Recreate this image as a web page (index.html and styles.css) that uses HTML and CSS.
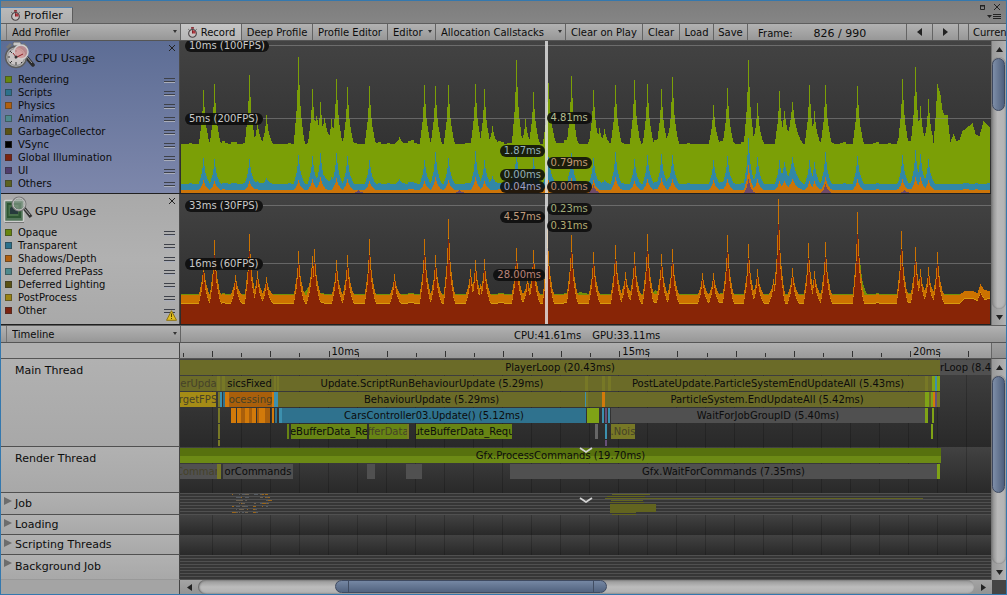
FILE: index.html
```html
<!DOCTYPE html>
<html lang="en">
<head>
<meta charset="utf-8">
<title>Profiler</title>
<link rel="stylesheet" href="styles.css">
</head>
<body>
<svg class="defs" aria-hidden="true">
  <symbol id="stopwatch" viewBox="0 0 12 12">
    <rect x="4.5" y="0" width="3" height="2" fill="#8a3038"/>
    <path d="M1.5 2.5l1.3 1.2M10.500 2.500l-1.300 1.200" stroke="#444" stroke-width="1"/>
    <circle cx="6" cy="7" r="4.200" fill="#c9c3c3" stroke="#4a4446" stroke-width="1.200"/>
    <path d="M6 7V3.500A3.500 3.500 0 0 1 9.500 7z" fill="#b03840"/>
    <path d="M6 7V3.500" stroke="#7c1820"/>
  </symbol>
</svg>
<main class="window">
  <header class="tabbar">
    <button class="tab"><svg class="icon"><use href="#stopwatch"/></svg>Profiler</button>
    <div class="window-controls">
      <div class="control-row">
        <button class="plain" aria-label="Maximize"><svg width="5" height="5" viewBox="0 0 5 5"><path d="M.5 1h4v3.500h-4z" fill="none" stroke="#222"/><path d="M0 .5h5" stroke="#222"/></svg></button>
        <button class="plain" aria-label="Close window"><svg width="8" height="8" viewBox="0 0 8 8"><path d="M1 1l6 6M7 1L1 7" stroke="#222"/></svg></button>
      </div>
      <button class="plain" aria-label="Window menu"><svg width="14" height="6" viewBox="0 0 14 6"><path d="M0 1h5L2.500 4z" fill="#222"/><path d="M6 .5h8M6 2.500h8M6 4.500h8" stroke="#222"/></svg></button>
    </div>
  </header>

  <div class="toolbar">
    <label class="drop drop-side"><select aria-label="Add Profiler"><option>Add Profiler</option></select></label>
    <button class="tool tool-on w-record"><svg class="icon"><use href="#stopwatch"/></svg>Record</button>
    <button class="tool w-deep">Deep Profile</button>
    <button class="tool w-wide">Profile Editor</button>
    <label class="drop w-editor"><select aria-label="Target"><option>Editor</option></select></label>
    <label class="drop w-alloc"><select aria-label="Allocation Callstacks"><option>Allocation Callstacks</option></select></label>
    <button class="tool w-play">Clear on Play</button>
    <button class="tool w-clear">Clear</button>
    <button class="tool w-load">Load</button>
    <button class="tool w-load">Save</button>
    <div class="frame"><span>Frame:</span><span>826 / 990</span></div>
    <button class="tool w-step" aria-label="Previous frame"><svg width="5" height="8" viewBox="0 0 5 8"><path d="M5 0v8L0 4z" fill="#222"/></svg></button>
    <button class="tool w-step" aria-label="Next frame"><svg width="5" height="8" viewBox="0 0 5 8"><path d="M0 0v8l5-4z" fill="#222"/></svg></button>
    <span class="spacer"></span>
    <button class="tool current">Current</button>
  </div>

  <section class="charts">
    <div class="chart-rows">
      <div class="chart-row">
        <aside class="legend legend-cpu">
          <div class="legend-head">
            <svg width="32" height="30" viewBox="0 0 32 30">
              <path d="M24 17l6 7" stroke="#2c2c2c" stroke-width="3.500" stroke-linecap="round"/><path d="M24 16l5 6" stroke="#999" stroke-width="1"/>
              <path d="M4 7l4-4M20 3l4 4" stroke="#777" stroke-width="3"/><rect x="10" y="1" width="8" height="4" rx="1.500" fill="#c6c6c6" stroke="#666"/>
              <circle cx="13" cy="16" r="10.500" fill="#b4b4b4" stroke="#5c5c5c" stroke-width="1.500"/>
              <circle cx="13" cy="16" r="8.500" fill="#c9c4c4" stroke="#8a8a8a"/>
              <path d="M13 9v2M13 21v3M5 16h2M7 10l2 2M7 22l2-2M18 21l1 1" stroke="#333"/>
              <circle cx="18" cy="11" r="7" fill="#d49696" fill-opacity=".75" stroke="#cfcfcf" stroke-width="1.500"/>
              <path d="M12 17l8-4M13 16l-3-4" stroke="#8c2026"/><circle cx="13" cy="16" r="1.500" fill="#333"/>
            </svg>
            <h2>CPU Usage</h2>
            <button class="plain close" aria-label="Remove CPU Usage"><svg width="8" height="8" viewBox="0 0 8 8"><path d="M1 1l6 6M7 1L1 7" stroke="#222"/></svg></button>
          </div>
          <ul>
            <li class="green">Rendering</li><li class="blue">Scripts</li><li class="orange">Physics</li><li class="teal">Animation</li><li class="olive">GarbageCollector</li><li class="black">VSync</li><li class="red">Global Illumination</li><li class="purple">UI</li><li class="moss">Others</li>
          </ul>
        </aside>
        <div class="chart">
          <svg id="cpu-chart" viewBox="0 0 811 152" preserveAspectRatio="none" role="img" aria-label="CPU usage"></svg>
          <div class="guide cpu-top"><span>10ms (100FPS)</span></div>
          <div class="guide cpu-mid"><span>5ms (200FPS)</span></div>
          <div class="cursor"></div>
          <div id="cpu-values"></div>
        </div>
      </div>
      <div class="chart-row">
        <aside class="legend legend-gpu">
          <div class="legend-head">
            <svg width="32" height="30" viewBox="0 0 32 30">
              <rect x="1.500" y="6.500" width="19" height="21" rx="1" fill="#53755a" stroke="#cdcdcd" stroke-width="1.500"/><path d="M2 28.500h19" stroke="#777"/>
              <rect x="4" y="9" width="14" height="15" fill="#2c5532"/><rect x="5.500" y="11" width="10" height="11" fill="#49704b"/><path d="M7 20v-6l3-2 5 3v5z" fill="#263a3c"/>
              <path d="M21 14l7 9" stroke="#333" stroke-width="3.500"/><path d="M21 14l6 7" stroke="#aaa"/>
              <circle cx="16" cy="10" r="6.500" fill="#8fa295" fill-opacity=".6" stroke="#777" stroke-width="2"/><circle cx="16" cy="10" r="6" fill="none" stroke="#ccc"/>
            </svg>
            <h2>GPU Usage</h2>
            <button class="plain close" aria-label="Remove GPU Usage"><svg width="8" height="8" viewBox="0 0 8 8"><path d="M1 1l6 6M7 1L1 7" stroke="#222"/></svg></button>
          </div>
          <ul>
            <li class="green">Opaque</li><li class="blue">Transparent</li><li class="orange">Shadows/Depth</li><li class="teal">Deferred PrePass</li><li class="olive">Deferred Lighting</li><li class="yellow">PostProcess</li><li class="red">Other</li>
          </ul>
          <svg class="warning" width="11" height="11" viewBox="0 0 11 11"><path d="M5.500.7L10.500 10.300H.5z" fill="#e0bd20" stroke="#8e7410"/><path d="M5.500 3.500v3.500M5.500 8v1" stroke="#544300"/></svg>
        </aside>
        <div class="chart">
          <svg id="gpu-chart" viewBox="0 0 811 130" preserveAspectRatio="none" role="img" aria-label="GPU usage"></svg>
          <div class="guide gpu-top"><span>33ms (30FPS)</span></div>
          <div class="guide gpu-mid"><span>16ms (60FPS)</span></div>
          <div class="cursor"></div>
          <div id="gpu-values"></div>
        </div>
      </div>
    </div>
    <div class="vscroll">
      <button class="plain" aria-label="Scroll charts up"><svg width="7" height="5" viewBox="0 0 7 5"><path d="M0 5h7L3.500 0z" fill="#222"/></svg></button>
      <div class="track"><div class="thumb thumb-charts"></div></div>
      <button class="plain" aria-label="Scroll charts down"><svg width="7" height="5" viewBox="0 0 7 5"><path d="M0 0h7L3.500 5z" fill="#222"/></svg></button>
    </div>
  </section>

  <div class="toolbar">
    <label class="drop drop-side"><select aria-label="View"><option>Timeline</option></select></label>
    <div class="totals"><span>CPU:41.61ms</span><span>GPU:33.11ms</span></div>
  </div>

  <div class="ruler-row"><div class="ruler-side"></div><div class="ruler" id="ruler"></div><div class="ruler-end"></div></div>

  <section class="timeline">
    <div class="threads">
      <div class="thread main"><h3>Main Thread</h3><div class="lane" id="main-lane"></div></div>
      <div class="thread render"><h3>Render Thread</h3><div class="lane" id="render-lane"></div></div>
      <div class="thread job"><h3><button class="fold" aria-label="Expand Job"></button>Job</h3><div class="lane striped" id="job-lane"></div></div>
      <div class="thread small"><h3><button class="fold" aria-label="Expand Loading"></button>Loading</h3><div class="lane"></div></div>
      <div class="thread small"><h3><button class="fold" aria-label="Expand Scripting Threads"></button>Scripting Threads</h3><div class="lane"></div></div>
      <div class="thread back"><h3><button class="fold" aria-label="Expand Background Job"></button>Background Job</h3><div class="lane striped"></div></div>
    </div>
    <div class="vscroll">
      <button class="plain" aria-label="Scroll threads up"><svg width="7" height="5" viewBox="0 0 7 5"><path d="M0 5h7L3.500 0z" fill="#222"/></svg></button>
      <div class="track"><div class="thumb thumb-threads"></div></div>
      <button class="plain" aria-label="Scroll threads down"><svg width="7" height="5" viewBox="0 0 7 5"><path d="M0 0h7L3.500 5z" fill="#222"/></svg></button>
    </div>
  </section>

  <footer class="hscroll">
    <div class="hscroll-side"></div>
    <button class="plain" aria-label="Scroll left"><svg width="5" height="7" viewBox="0 0 5 7"><path d="M5 0v7L0 3.500z" fill="#222"/></svg></button>
    <div class="htrack"><div class="hthumb"></div></div>
    <button class="plain" aria-label="Scroll right"><svg width="5" height="7" viewBox="0 0 5 7"><path d="M0 0v7l5-3.500z" fill="#222"/></svg></button>
    <div class="corner"></div>
  </footer>
</main>
<script src="script.js"></script>
</body>
</html>
```
FILE: styles.css
```css
*, *::before, *::after { box-sizing: border-box; }
body { margin: 0; background: #828282; color: #0c0c0c; font: 10px/13px "DejaVu Sans", Verdana, sans-serif; }
button, select { font: inherit; color: inherit; margin: 0; padding: 0; border: 0; border-radius: 0; background: none; }
h2, h3, ul { margin: 0; padding: 0; font-weight: normal; list-style: none; }
svg { display: block; flex: none; }
.defs { position: absolute; width: 0; height: 0; }
.window { display: flex; flex-direction: column; min-height: 100vh; border: 1px solid #3478ae; overflow: hidden; }
.icon { width: 11px; height: 11px; }
.plain { display: flex; align-items: center; justify-content: center; }

.tabbar { display: flex; justify-content: space-between; height: 22px; background: linear-gradient(#7d7d7d, #858585); }
.tab { display: flex; align-items: center; gap: 3px; align-self: flex-end; height: 16px; padding: 0 9px; font-size: 11px; background: linear-gradient(#bababa, #aeaeae); border-top: 1px solid #5183b3; border-right: 1px solid #5c5c5c; }
.window-controls { display: flex; flex-direction: column; align-items: flex-end; gap: 3px; padding: 2px 5px 0 0; }
.control-row { display: flex; align-items: center; gap: 8px; }

.toolbar { display: flex; height: 18px; background: linear-gradient(#b2b2b2, #979797); border-top: 1px solid #5e5e5e; border-bottom: 1px solid #555; }
.tool, .drop { flex: none; display: flex; align-items: center; justify-content: center; gap: 3px; border-right: 1px solid #646464; white-space: nowrap; overflow: hidden; }
.tool-on { background: linear-gradient(#c6c6c6, #b5b5b5); }
.drop { position: relative; justify-content: flex-start; }
.drop select { appearance: none; width: 100%; height: 100%; padding-left: 5px; outline: 0; }
.drop::after { content: ""; position: absolute; right: 3px; top: 6px; border: 2px solid transparent; border-top: 3px solid #333; border-bottom: 0; }
.drop-side { width: 175px; margin-left: 5px; border-left: 1px solid #757575; }
.w-record { width: 61px; }
.w-deep { width: 71px; }
.w-wide { width: 75px; }
.w-editor { width: 48px; }
.w-alloc { width: 130px; }
.w-play { width: 77px; }
.w-clear { width: 37px; }
.w-load { width: 34px; }
.w-step { width: 26px; }
.frame { flex: none; display: flex; align-items: center; gap: 21px; width: 159px; padding: 2px 0 0 10px; border-right: 1px solid #646464; font-size: 11px; }
.frame span:first-child { font-size: 10px; }
.spacer { flex: none; width: 10px; border-right: 1px solid #646464; }
.current { flex: 1 1 0; justify-content: flex-start; padding-left: 4px; border: 0; }

.charts, .timeline { display: flex; }
.chart-rows, .threads { flex: 1; min-width: 0; }
.chart-row { display: grid; grid-template-columns: 179px minmax(0, 1fr); border-bottom: 1px solid #202020; }
.legend { position: relative; border-right: 1px solid #4b4b4b; }
.legend-cpu { padding-bottom: 3px; background: linear-gradient(#5d6d95, #7d87ab); }
.legend-gpu { padding-bottom: 7px; background: linear-gradient(#a9a9a9, #b1b1b1 50%, #a9a9a9); }
.legend-head { display: flex; height: 32px; padding: 0 3px 0 2px; }
.legend-head h2 { flex: 1; padding-top: 10px; font-size: 11px; line-height: 16px; }
.close { align-self: flex-start; padding-top: 3px; }
.legend li { display: flex; align-items: center; gap: 6px; height: 13px; padding: 0 4px; white-space: nowrap; }
.legend li::before { content: ""; width: 7px; height: 7px; border: 1px solid rgba(50, 50, 50, .5); background: var(--c); }
.legend li::after { content: ""; width: 11px; height: 4px; margin-left: auto; border: solid #3e4149; border-width: 1px 0; box-shadow: 0 1px 0 #a9adba; }
.green { --c: #67860f; } .blue { --c: #2c718c; } .orange { --c: #b16010; } .teal { --c: #4d898d; } .olive { --c: #5a5214; }
.black { --c: #000; } .red { --c: #7c2210; } .purple { --c: #4f3c6c; } .moss { --c: #5c6220; } .yellow { --c: #9b8413; }
.warning { position: absolute; right: 2px; bottom: 3px; }
.chart { position: relative; overflow: hidden; background: linear-gradient(#434343, #2b2b2b); }
.chart > svg { position: absolute; width: 100%; height: 100%; shape-rendering: crispEdges; }
.guide { position: absolute; left: 5px; right: 0; display: flex; align-items: center; height: 13px; }
.guide::after { content: ""; flex: 1; height: 1px; background: rgba(150, 150, 150, .5); }
.guide span, .value { padding: 0 4px; border-radius: 6px; background: rgba(12, 12, 12, .88); color: #c9c9c9; line-height: 12px; white-space: nowrap; }
.cpu-top { top: -2px; } .cpu-mid { top: 71px; } .gpu-top { top: 5px; } .gpu-mid { top: 63px; }
.cursor { position: absolute; top: 0; bottom: 0; left: 45%; width: 3px; background: rgba(230, 230, 230, .8); }
.value { position: absolute; }
.value.before { right: 55%; }
.value.after { left: 45.2%; }

.vscroll { flex: none; display: flex; flex-direction: column; width: 15px; background: linear-gradient(90deg, #999, #b2b2b2); border-left: 1px solid #747474; }
.vscroll .plain { height: 16px; }
.track { flex: 1; padding-top: 1px; border-radius: 7px; background: linear-gradient(90deg, #8d8d8d, #b8b8b8 40%, #b3b3b3); box-shadow: inset 0 0 2px #666; }
.thumb { width: 13px; border: 1px solid #3e4960; border-radius: 7px; background: linear-gradient(90deg, #7e8ea8, #4e5f7c); }
.thumb-charts { height: 21%; }
.thumb-threads { height: 62%; }
.totals { flex: 1; display: flex; gap: 11px; padding: 3px 0 0 333px; line-height: 13px; }

.ruler-row { display: grid; grid-template-columns: 179px minmax(0, 1fr) 15px; height: 16px; background: linear-gradient(#b0b0b0, #9a9a9a); border-bottom: 1px solid #555; }
.ruler-side { background: #b0b0b0; border-right: 1px solid #444; }
.ruler-end { border-left: 1px solid #666; background: linear-gradient(#a0a0a0, #8f8f8f); }
.ruler { position: relative; overflow: hidden; }
.tick { position: absolute; bottom: 1px; width: 1px; height: 4px; background: #333; }
.tick.tall { height: 6px; }
.tick-label { position: absolute; bottom: 0; padding-left: 3px; }

.timeline { flex: 1; }
.threads { display: flex; flex-direction: column; }
.thread { display: grid; grid-template-columns: 179px minmax(0, 1fr); }
.main { min-height: 88px; } .render { min-height: 46px; } .job { min-height: 22px; } .small { min-height: 20px; } .back { flex: 1; min-height: 25px; }
.thread h3 { position: relative; padding-left: 14px; border-right: 1px solid #444; border-bottom: 1px solid #505050; background: linear-gradient(#b1b1b1, #a8a8a8); font-size: 11px; line-height: 19px; }
.main h3, .render h3 { line-height: 23px; }
.job h3 { line-height: 21px; }
.back h3 { border-bottom-color: #999; line-height: 23px; }
.fold { position: absolute; left: 3px; top: 4px; border: 4px solid transparent; border-left: 8px solid #6d6d6d; border-right: 0; }
.lane { position: relative; overflow: hidden; background: repeating-linear-gradient(90deg, transparent 0 28px, rgba(0, 0, 0, .2) 28px 29px) 4px 0, linear-gradient(#424242, #292929); }
.striped { background: repeating-linear-gradient(#505050 0 1px, #363636 1px 3px); }
.bar { position: absolute; height: 15px; overflow: hidden; white-space: nowrap; line-height: 15px; display: flex; justify-content: center; background: var(--c); }
.bar.dim { color: #454228; }
.bar.grey.dim { color: #262626; }
.bar.short { height: 6px; }
.b-olive { --c: #6b6b28; } .b-olive2 { --c: #777826; } .b-yellow { --c: #a58c16; } .b-orange { --c: #a95f0b; } .b-orange2 { --c: #d27a0a; }
.b-blue { --c: #2f728e; } .b-blue2 { --c: #3c90ae; } .b-green { --c: #678414; } .b-green2 { --c: #7fa316; } .b-grey { --c: #505050; } .b-grey2 { --c: #666; } .b-purple { --c: #67507a; }
.b-gfx { background: linear-gradient(#57710e 50%, #6c8a15 50%); }
.chevron { position: absolute; width: 14px; height: 6px; }

.hscroll { display: flex; height: 14px; background: linear-gradient(#a4a4a4, #939393); }
.hscroll-side { flex: none; width: 179px; border-right: 1px solid #444; background: #a4a4a4; }
.hscroll .plain { flex: none; width: 18px; }
.htrack { flex: 1; border-radius: 7px; background: linear-gradient(#959595, #bcbcbc 50%, #b0b0b0); box-shadow: inset 1px 0 2px #555; }
.hthumb { width: 35%; height: 13px; margin: 0 0 0 17.7%; border: 1px solid #3f4a60; border-radius: 7px; background: linear-gradient(#7587a3, #52637f); position: relative; }
.hthumb::before { content: ""; position: absolute; inset: 0 12px; border: solid #414d62; border-width: 0 1px; }
.corner { width: 14px; background: #444; }
```
FILE: script.js
```js
const WIDTH = 811;
const ORIGIN = 180;
const pct = (px) => (px / WIDTH * 100).toFixed(3) + '%';

/* Frame samples: [x, peak height, optional spread] */
const cpuPeaks = [[203,90],[214,84],[249,75],[257,122],[266,115],[298,57],[312,89],[316,116,2],[320,102],[324,118,1.6],[331,119],[336,79],[347,87],[369,86],[399,137],[424,85],[435,86],[448,85],[475,84],[484,89],[492,126],[516,60],[525,119],[533,92],[548,83,1.2],[571,76],[593,90],[599,128],[604,129],[615,85],[634,80],[647,84],[661,89],[672,77],[668,133,1.6],[713,105],[727,88],[748,60],[757,103],[779,91],[784,111,1.4],[792,102,1.6],[809,85],[814,111],[825,85],[857,86],[902,79],[915,67],[920,106],[928,99]];
const gpuPeaks = [[203,262],[214,240],[235,275],[249,234],[257,271],[266,277],[298,251],[312,256,1.2],[314,249],[336,260],[347,255],[369,239],[394,274],[424,239],[435,255],[448,219],[470,269],[475,260],[480,284],[484,259],[516,248],[527,278],[533,250],[547,230],[571,235],[593,252],[615,245],[625,272],[634,252],[647,234],[661,254],[672,249],[702,273],[713,273],[727,235],[748,244],[757,269],[773,279],[778,199],[792,268],[808,243],[814,271],[825,242],[857,212],[901,231],[915,247],[920,269],[928,267],[937,252]];
/* Slowly changing stretches at the end of the capture: [x, height] */
const cpuTail = [[933,143],[935,118],[937,84],[940,95],[942,110],[944,115],[947,115],[949,134],[950,142],[953,134],[956,141],[959,140],[962,131],[966,128],[972,123],[975,134],[979,136],[983,121],[989,127]];
const gpuTail = [[959,295],[964,291],[973,291],[977,293],[980,284],[984,290],[989,291]];
const gpuRedTail = [[959,304],[964,299],[973,299],[977,301],[980,293],[984,300],[989,299]];
const profile = [[-5,0],[-4,.1],[-3,.24],[-2,.38],[-1,.62],[0,1],[1,.68],[2,.44],[3,.3],[4,.2],[5,.1],[6,.04],[7,0]];

function shape(dx) {
  if (dx <= -5 || dx >= 7) return 0;
  const i = Math.floor(dx) + 5;
  return profile[i][1] + (profile[i + 1][1] - profile[i][1]) * (dx - Math.floor(dx));
}
function wobble(x, amount) {
  const k = Math.floor(x / 3);
  return amount * (Math.sin(k * 1.7) + Math.sin(k * .61 + 2) + Math.sin(k * .23)) / 3;
}
function series(peaks, base, amount, pick, tail, top) {
  const out = [];
  for (let x = 1; x < 810; x++) {
    let y = base + wobble(x, amount);
    for (const p of peaks) {
      const h = base - pick(p);
      if (h > 0) y = Math.min(y, base - h * shape((x + ORIGIN - p[0]) / (p[2] || 1)));
    }
    if (tail) {
      for (let i = 1; i < tail.length; i++) {
        const a = tail[i - 1], b = tail[i], px = x + ORIGIN;
        if (px >= a[0] && px <= b[0]) y = a[1] + (b[1] - a[1]) * (px - a[0]) / (b[0] - a[0]) - top;
      }
    }
    out.push(Math.round(y));
  }
  return out;
}
function area(values, bottom, color) {
  let d = 'M1 ' + bottom;
  values.forEach((y, i) => { d += 'V' + y + 'H' + (i + 2); });
  return '<path fill="' + color + '" d="' + d + 'V' + bottom + 'Z"/>';
}
const cpuTop = 41, gpuTop = 194;
const big = (p) => p[1] < 112;
const purple = {748: 138, 825: 143, 593: 144};
document.getElementById('cpu-chart').innerHTML =
  area(series(cpuPeaks, 103, 4, (p) => p[1] - cpuTop, cpuTail, cpuTop), 152, '#7b9f06') +
  area(series(cpuPeaks, 143, 2, (p) => p[0] === 748 ? 97 : big(p) ? 102 + p[1] * .1 + (p[0] % 5) * 2 : 135 + p[0] % 6), 152, '#3287a6') +
  area(series(cpuPeaks, 149, 1, (p) => p[0] === 748 ? 124 : big(p) ? 136 + p[0] % 5 : 149), 152, '#cc7408') +
  area(series([[593,0],[748,0],[825,0],[904,0],[358,0],[459,0]], 152, 0, (p) => purple[p[0]] || 149), 152, '#704b68');

const gOrange = series(gpuPeaks, 101, 1, (p) => p[1] - gpuTop, gpuTail, gpuTop);
const gRed = series(gpuPeaks, 110, 1, (p) => 110 - (110 - (p[1] - gpuTop)) * .76, gpuRedTail, gpuTop);
document.getElementById('gpu-chart').innerHTML =
  area(series([[307,288,1.4],[580,292,2],[752,292,2],[860,265],[655,290,2]], 100, 1, (p) => p[1] - gpuTop), 130, '#719108') +
  area(gOrange, 130, '#cc7200') +
  area(gRed.map((y) => y - 1), 130, '#d89b0d') +
  area(gRed, 130, '#882506');

function values(id, list) {
  document.getElementById(id).innerHTML = list.map(([text, top, side, color]) =>
    '<span class="value ' + side + '" style="top:' + top + 'px;color:' + color + '">' + text + '</span>').join('');
}
values('cpu-values', [['4.81ms',71,'after','#b5bd91'],['1.87ms',104,'before','#94b2bd'],['0.79ms',116,'after','#c19a76'],['0.00ms',128,'before','#94aeb5'],['0.04ms',140,'before','#9d9fc0'],['0.00ms',140,'after','#bd8a66']]);
values('gpu-values', [['0.23ms',9,'after','#a2ae7a'],['4.57ms',17,'before','#c19d7c'],['0.31ms',26,'after','#b2ab70'],['28.00ms',75,'before','#b98378']]);

/* Time ruler: one tick every half millisecond */
let ticks = '';
for (let half = 15; half <= 42; half++) {
  const left = pct(148.5 + (half / 2 - 10) * 58.16);
  ticks += '<span class="tick' + (half % 2 ? '' : ' tall') + '" style="left:' + left + '"></span>';
  if (half % 10 === 0) ticks += '<span class="tick-label" style="left:' + left + '">' + half / 2 + 'ms</span>';
}
document.getElementById('ruler').innerHTML = ticks;

/* Samples: [start, end, row, colour, label, modifier] */
const mainBars = [
  [180,940,0,'olive','PlayerLoop (20.43ms)'],[940,991,0,'grey','rLoop (8.4'],
  [180,217,1,'olive','erUpda','dim'],[217,220,1,'olive2'],[220,222,1,'olive'],[222,225,1,'olive2'],[225,274,1,'olive','sicsFixed'],[274,276,1,'olive2'],[276,277,1,'olive'],[277,279,1,'olive2'],[279,585,1,'olive','Update.ScriptRunBehaviourUpdate (5.29ms)'],[585,588,1,'olive2'],[588,602,1,'olive'],[602,605,1,'olive2'],[605,608,1,'olive'],[608,611,1,'olive2'],[611,925,1,'olive','PostLateUpdate.ParticleSystemEndUpdateAll (5.43ms)'],[925,928,1,'olive2'],[928,932,1,'olive'],[932,935,1,'green2'],[935,937,1,'blue2'],[937,940,1,'green2'],
  [180,216,2,'yellow','rgetFPS','dim'],[218,220,2,'olive2'],[220,222,2,'blue2'],[223,225,2,'blue'],[225,229,2,'orange2'],[229,272,2,'orange','ocessing','dim'],[272,274,2,'orange2'],[274,278,2,'blue2'],[278,585,2,'olive','BehaviourUpdate (5.29ms)'],[585,586,2,'blue2'],[586,588,2,'olive2'],[588,602,2,'olive'],[602,605,2,'orange2'],[605,609,2,'olive'],[609,925,2,'olive','ParticleSystem.EndUpdateAll (5.42ms)'],[925,929,2,'green2'],[929,931,2,'olive'],[931,933,2,'green2'],[933,935,2,'orange2'],[935,937,2,'purple'],[937,940,2,'olive2'],
  [218,220,3,'olive2'],[231,236,3,'orange2'],[237,241,3,'orange2'],[241,245,3,'orange'],[245,249,3,'orange2'],[249,252,3,'orange'],[252,256,3,'orange2'],[257,259,3,'orange'],[259,265,3,'orange2'],[265,270,3,'orange'],[272,274,3,'orange2'],[275,277,3,'blue'],[279,287,3,'blue2'],[282,586,3,'blue','CarsController03.Update() (5.12ms)'],[587,599,3,'green2'],[602,604,3,'blue2'],[605,607,3,'purple'],[608,610,3,'blue2'],[611,925,3,'grey','WaitForJobGroupID (5.40ms)'],[925,928,3,'green2'],[932,934,3,'green2'],
  [218,220,4,'olive2'],[287,289,4,'green'],[291,367,4,'green','eBufferData_Re'],[369,407,4,'green','fferData','dim'],[407,409,4,'olive2'],[416,512,4,'green','uteBufferData_Requ'],[595,598,4,'grey2'],[605,607,4,'blue2'],[611,635,4,'olive2','.Nois','dim'],[931,933,4,'green2'],
  [218,220,5,'olive2','','short'],[605,607,5,'purple','','short']];
const renderBars = [[180,941,0,'gfx','Gfx.ProcessCommands (19.70ms)'],[180,217,1,'grey','Comman','dim'],[217,221,1,'olive2'],[223,293,1,'grey','orCommands'],[367,375,1,'grey'],[406,422,1,'grey'],[510,937,1,'grey','Gfx.WaitForCommands (7.35ms)'],[937,940,1,'green2']];

function drawBars(id, bars, extra) {
  document.getElementById(id).innerHTML = bars.map(([a, b, row, color, text, mod]) =>
    '<div class="bar b-' + color + ' ' + (mod || '') + '" style="left:' + pct(a - ORIGIN) + ';width:' + pct(b - a) + ';top:' + (row * 16 + 1) + 'px">' + (text || '') + '</div>').join('') + (extra || '');
}
const chevron = (top) => '<svg class="chevron" viewBox="0 0 14 6" style="left:' + pct(398.500) + ';top:' + top + 'px"><path d="M1 1l6 4 6-4" fill="none" stroke="#d2d2d2" stroke-width="1.800"/></svg>';
drawBars('main-lane', mainBars);
drawBars('render-lane', renderBars, chevron(0));

/* Worker activity: scattered short jobs, then the particle batch */
let job = '<svg width="100%" height="22" viewBox="0 0 811 22" preserveAspectRatio="none" shape-rendering="crispEdges">';
for (let i = 0; i < 60; i++) {
  job += '<rect x="' + (52 + (i * i * 7 + i * 3) % 39) + '" y="' + (1 + (i * 5) % 7 * 3) + '" width="' + (1 + i % 4) + '" height="1" fill="' + ['#9b6518', '#6b6050', '#555b62'][i % 3] + '"/>';
}
for (const [x, y, w, h] of [[432,1,38,1],[427,3,38,1],[425,5,318,1],[431,7,32,1],[430,9,34,1],[430,11,46,2],[430,13,46,2],[430,15,46,2],[430,17,46,2],[430,19,26,1],[432,21,24,1]]) {
  job += '<rect x="' + x + '" y="' + y + '" width="' + w + '" height="' + h + '" fill="#62641f"/>';
}
document.getElementById('job-lane').innerHTML = job + '</svg>' + chevron(4);
```
